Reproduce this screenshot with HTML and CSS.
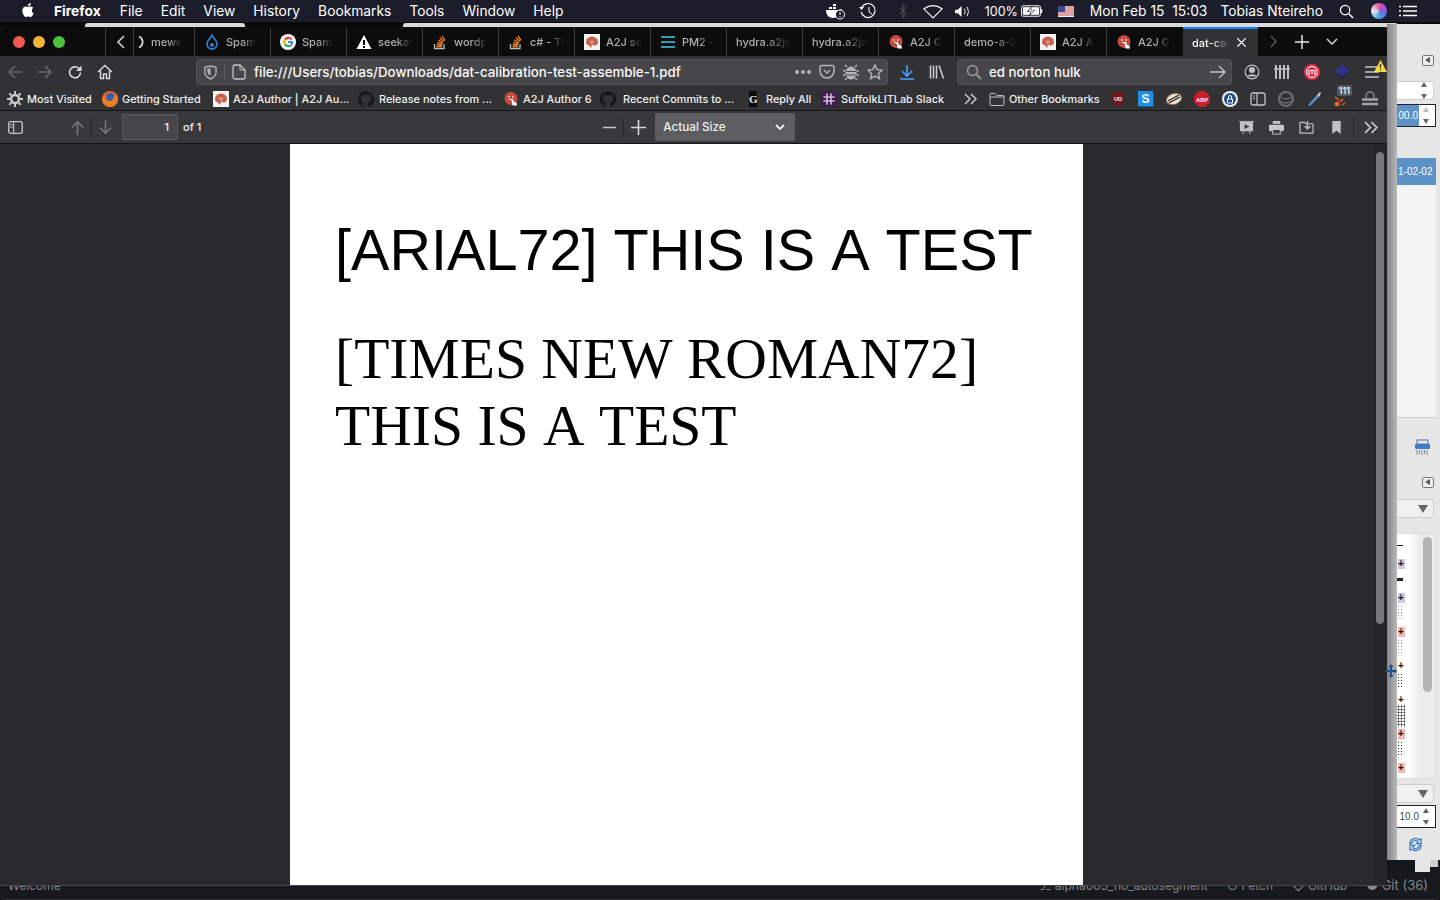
FILE: index.html
```html
<!DOCTYPE html>
<html lang="en">
<head>
    <meta charset="UTF-8">
    <title>dat-calibration-test-assemble-1.pdf</title>
    <link rel="stylesheet" href="styles.css">
</head>
<body>
<svg class="defs">
    <symbol id="brain" viewBox="0 0 16 16"><rect width="16" height="16" fill="#f4f4f4"/><path d="M2 8a6 5.600 0 0 1 12 0c0 2-1 3-2.500 3.600L8 11l-1 3-2-2.500C3 11 2 9.600 2 8z" fill="#c4634c"/><path d="M6 8q2-2 4 0M7 10q1-1 2 0" stroke="#f1c8b8" fill="none"/></symbol>
    <symbol id="a2j" viewBox="0 0 16 16"><circle cx="8" cy="7.500" r="6.500" fill="#c8493f"/><path d="M5 6h2M9 6h2M6 8.500h4" stroke="#fff" stroke-width="1"/><path d="M8.500 9l1 5.500h4.500l-.5-3-2.500-.5-.5-2z" fill="#fff"/></symbol>
    <symbol id="github" viewBox="0 0 24 24"><path fill="#17171a" d="M12 .297c-6.630 0-12 5.373-12 12 0 5.303 3.438 9.800 8.205 11.385.600.113.820-.258.820-.577 0-.285-.010-1.040-.015-2.040-3.338.724-4.042-1.610-4.042-1.610C4.422 18.070 3.633 17.700 3.633 17.700c-1.087-.744.084-.729.084-.729 1.205.084 1.838 1.236 1.838 1.236 1.070 1.835 2.809 1.305 3.495.998.108-.776.417-1.305.760-1.605-2.665-.300-5.466-1.332-5.466-5.930 0-1.310.465-2.380 1.235-3.220-.135-.303-.540-1.523.105-3.176 0 0 1.005-.322 3.300 1.230.960-.267 1.980-.399 3-.405 1.020.006 2.040.138 3 .405 2.280-1.552 3.285-1.230 3.285-1.230.645 1.653.240 2.873.120 3.176.765.840 1.230 1.910 1.230 3.220 0 4.610-2.805 5.625-5.475 5.920.420.360.810 1.096.810 2.220 0 1.606-.015 2.896-.015 3.286 0 .315.210.690.825.570C20.565 22.092 24 17.592 24 12.297c0-6.627-5.373-12-12-12"/></symbol>
    <symbol id="so" viewBox="0 0 16 16"><path d="M2.500 10v4.500h9.500V10" stroke="#bcbbbb" fill="none" stroke-width="1.300"/><path d="M4.500 12.500h5.500M4.700 10.500l5.400.6M5.200 8.300l5.300 1.500M6.200 6l4.800 2.600M7.800 3.800l4.200 3.500M10 1.800l3 4.500" stroke="#f48024" stroke-width="1.300" fill="none"/></symbol>
</svg>

<div class="desktop">
    <header class="menubar">
        <svg class="apple" viewBox="0 0 24 24"><path fill="#fff" d="M12.152 6.896c-.948 0-2.415-1.078-3.960-1.040-2.040.027-3.910 1.183-4.961 3.014-2.117 3.675-.546 9.103 1.519 12.090 1.013 1.454 2.208 3.090 3.792 3.039 1.520-.065 2.090-.987 3.935-.987 1.831 0 2.350.987 3.960.948 1.637-.026 2.676-1.480 3.676-2.948 1.156-1.688 1.636-3.325 1.662-3.415-.039-.013-3.182-1.221-3.220-4.857-.026-3.040 2.480-4.494 2.597-4.559-1.429-2.090-3.623-2.324-4.390-2.376-2-.156-3.675 1.090-4.610 1.090zM15.530 3.830c.843-1.012 1.400-2.427 1.245-3.830-1.207.052-2.662.805-3.532 1.818-.780.896-1.454 2.338-1.273 3.714 1.338.104 2.715-.688 3.559-1.701"/></svg>
        <nav class="menu-items">
            <b>Firefox</b><span>File</span><span>Edit</span><span>View</span><span>History</span><span>Bookmarks</span><span>Tools</span><span>Window</span><span>Help</span>
        </nav>
        <div class="status">
            <svg class="st st-docker" viewBox="0 0 20 18"><path d="M1 8h13c1 0 2-1 3-1-.5 4-4 9-9 9-4 0-7-3-7-8z" fill="#fff"/><path d="M4 5h3v2H4zM8 5h3v2H8zM8 2h3v2H8z" fill="#fff"/><circle cx="15" cy="12.500" r="4.500" fill="#1b1d2a" stroke="#fff"/><path d="M15 10v3M15 14v1" stroke="#fff"/></svg>
            <svg class="st st-time" viewBox="0 0 20 18"><path d="M4 5a7 7 0 1 1-.8 5" fill="none" stroke="#fff" stroke-width="1.200"/><path d="M1 5h5l-2.500 3z" fill="#fff"/><path d="M11 5v5l3 2" fill="none" stroke="#fff"/></svg>
            <svg class="st st-blue" viewBox="0 0 12 18"><path d="M2 5l8 8-4 4V1l4 4-8 8" fill="none" stroke="#55565f" stroke-width="1.200"/></svg>
            <svg class="st st-wifi" viewBox="0 0 22 16"><path d="M1 5q10-7 20 0L11 15z" fill="none" stroke="#fff" stroke-width="1.200"/></svg>
            <svg class="st st-vol" viewBox="0 0 18 14"><path d="M1 5h3l4-4v12l-4-4H1z" fill="#fff"/><path d="M11 4q2 3 0 6M14 2q3 5 0 10" fill="none" stroke="#fff"/></svg>
            <span class="st-pct">100%</span>
            <svg class="st st-batt" viewBox="0 0 23 12"><rect x=".5" y=".5" width="20" height="11" rx="2" fill="#1b1d2a" stroke="#fff"/><rect x="2" y="2" width="17" height="8" fill="#fff"/><path d="M21.500 4v4" stroke="#fff" stroke-width="1.500"/><path d="M12 0L6 7h4l-2 5 7-7h-4z" fill="#1b1d2a"/><path d="M11.500 1.500L7.500 6.500h3.500l-1.500 3.500 4.500-4.500h-3.500z" fill="#fff"/></svg>
            <svg class="st st-flag" viewBox="0 0 16 11"><rect width="16" height="11" fill="#eee"/><path d="M0 1h16M0 3h16M0 5h16M0 7h16M0 9h16" stroke="#c55" /><rect width="7" height="6" fill="#3a4a8c"/></svg>
            <span class="st-clock">Mon Feb 15&nbsp; 15:03</span>
            <span class="st-user">Tobias Nteireho</span>
            <svg class="st st-find" viewBox="0 0 16 16"><circle cx="6.500" cy="6.500" r="5" fill="none" stroke="#fff" stroke-width="1.300"/><path d="M10.500 10.500l4.500 4.500" stroke="#fff" stroke-width="1.500"/></svg>
            <span class="siri"></span>
            <svg class="st st-list" viewBox="0 0 18 12"><path d="M4 1.500h14M4 6h14M4 10.500h14" stroke="#fff" stroke-width="1.600"/><path d="M0 1.500h2M0 6h2M0 10.500h2" stroke="#fff" stroke-width="1.600"/></svg>
        </div>
    </header>

    <div class="back-strips">
        <i class="strip strip-a"></i>
        <i class="strip strip-b"></i>
    </div>

    <!-- ventana de atras, solo se ve el borde derecho -->
    <aside class="back-window">
        <div class="bw-shadow"></div>
        <div class="bw-body">
            <span class="bw-collapse bw-collapse-top"></span>
            <div class="bw-select bw-select-top"><span class="spin"></span></div>
            <div class="bw-input bw-input-top"><span class="bw-selected">00.0</span><span class="spin spin-dim"></span></div>
            <div class="bw-list"><div class="bw-row">1-02-02</div></div>
            <svg class="bw-shred" viewBox="0 0 17 17"><rect x="3" y="1" width="11" height="4" fill="#e8e8e8" stroke="#4a6f9e"/><rect x="1" y="5" width="15" height="5" rx="1" fill="#3d7dc4"/><path d="M3 11v5M5.500 11v4M8 11v5M10.500 11v4M13 11v5" stroke="#7d8a98"/></svg>
            <span class="bw-collapse bw-collapse-mid"></span>
            <div class="bw-select bw-select-mid"><i class="bw-drop"></i></div>
            <div class="bw-canvas">
                <div class="bw-dots">
                    <div class="dot-row dot-row-first"><i class="dash"></i><b class="plus plus-blue">+</b></div>
                    <div class="dot-row"><i class="wedge"></i><b class="plus plus-blue">+</b></div>
                    <div class="dot-row"><i class="noise"></i><b class="plus plus-red">+</b></div>
                    <div class="dot-row"><i class="noise"></i><b class="plus">+</b></div>
                    <div class="dot-row"><i class="noise noise-dark"></i><b class="plus">+</b></div>
                    <div class="dot-row"><i class="noise noise-big"></i><b class="plus plus-red">+</b></div>
                    <div class="dot-row"><i class="noise noise-dark"></i><b class="plus plus-red">+</b></div>
                </div>
                <div class="bw-scroll"><span></span></div>
            </div>
            <div class="bw-select bw-select-low"><i class="bw-drop"></i></div>
            <div class="bw-input bw-input-low"><span class="bw-value">10.0</span><span class="spin"></span></div>
            <svg class="bw-refresh" viewBox="0 0 16 18"><path d="M2 8a6 6 0 0 1 10-4l2-1v5H9l2-2a4 4 0 0 0-7 2zM14 10a6 6 0 0 1-10 4l-2 1v-5h5l-2 2a4 4 0 0 0 7-2z" fill="none" stroke="#3a7cc0" stroke-width="1.300"/></svg>
        </div>
        <div class="bw-feet"><i class="foot-a"></i><i class="foot-b"></i></div>
    </aside>

    <footer class="statusbar">
        <span class="sb-welcome">Welcome</span>
        <span class="sb-right">
            <span>&#9095; alpha005_no_autosegment</span>
            <span>&#8635; Fetch</span>
            <span>&#9671; GitHub</span>
            <span class="sb-git">&#9679; Git (36)</span>
        </span>
    </footer>

    <main class="firefox">
        <div class="tabbar">
            <div class="lights"><i class="red"></i><i class="yellow"></i><i class="green"></i></div>
            <div class="tab-scroll tab-scroll-left"><svg viewBox="0 0 10 14"><path d="M8 1L2 7l6 6" fill="none" stroke="#d4d4d6" stroke-width="1.500"/></svg></div>
            <div class="tab tab-first"><svg viewBox="0 0 16 16"><path d="M5 2.500a6 6 0 0 1 0 11" fill="none" stroke="#ddd" stroke-width="1.800"/></svg><span>mewe</span></div>
            <div class="tab"><svg viewBox="0 0 16 16"><path d="M8 1c1 3 5 5 5 9a5 5 0 0 1-10 0c0-4 4-6 5-9z" fill="none" stroke="#2a7fc4" stroke-width="1.800"/><circle cx="8" cy="11" r="2" fill="#2a7fc4"/></svg><span>Spam</span></div>
            <div class="tab"><svg viewBox="0 0 16 16"><circle cx="8" cy="8" r="8" fill="#fff"/><path d="M12.500 5A5.200 5.200 0 0 0 4 5l2 1.500a3 3 0 0 1 5-.5z" fill="#ea4335"/><path d="M4 5a5.200 5.200 0 0 0 0 6l2-1.500a3 3 0 0 1 0-3z" fill="#fbbc05"/><path d="M4 11a5.200 5.200 0 0 0 7.500 1L10 10.500a3 3 0 0 1-4-1z" fill="#34a853"/><path d="M8 7h5.200a5.200 5.200 0 0 1-1.700 5L10 10.500a2.500 2.500 0 0 0 1-1.500H8z" fill="#4285f4"/></svg><span>Spam</span></div>
            <div class="tab"><svg viewBox="0 0 16 16"><path d="M8 1l7.500 14H.5z" fill="#fff"/><path d="M7 6h2v5H7zM7 12h2v2H7z" fill="#0c0c0d"/></svg><span>seekal</span></div>
            <div class="tab"><svg viewBox="0 0 16 16"><use href="#so"/></svg><span>wordp</span></div>
            <div class="tab"><svg viewBox="0 0 16 16"><use href="#so"/></svg><span>c# - Ti</span></div>
            <div class="tab"><svg viewBox="0 0 16 16"><use href="#brain"/></svg><span>A2J se</span></div>
            <div class="tab"><svg viewBox="0 0 16 16"><path d="M1 3h14M1 8h14M1 13h14" stroke="#2f9fb4" stroke-width="2"/></svg><span>PM2 -</span></div>
            <div class="tab tab-plain"><span>hydra.a2ja</span></div>
            <div class="tab tab-plain"><span>hydra.a2ja</span></div>
            <div class="tab"><svg viewBox="0 0 16 16"><use href="#a2j"/></svg><span>A2J G</span></div>
            <div class="tab tab-plain"><span>demo-a-2</span></div>
            <div class="tab"><svg viewBox="0 0 16 16"><use href="#brain"/></svg><span>A2J A</span></div>
            <div class="tab"><svg viewBox="0 0 16 16"><use href="#a2j"/></svg><span>A2J G</span></div>
            <div class="tab tab-active"><span>dat-cal</span><svg class="tab-close" viewBox="0 0 12 12"><path d="M1.500 1.500l9 9M10.500 1.500l-9 9" stroke="#fff" stroke-width="1.500"/></svg></div>
            <div class="tab-tools">
                <svg class="tt-next" viewBox="0 0 10 14"><path d="M2 1l6 6-6 6" fill="none" stroke="#5b5b5f" stroke-width="1.500"/></svg>
                <svg class="tt-plus" viewBox="0 0 14 14"><path d="M7 0v14M0 7h14" stroke="#e4e4e6" stroke-width="1.500"/></svg>
                <svg class="tt-down" viewBox="0 0 12 8"><path d="M1 1l5 5 5-5" fill="none" stroke="#d4d4d6" stroke-width="1.500"/></svg>
            </div>
        </div>

        <div class="navbar">
            <div class="nav-btn"><svg viewBox="0 0 16 16"><path d="M15 8H2M8 2L2 8l6 6" fill="none" stroke="#69696d" stroke-width="1.500"/></svg></div>
            <div class="nav-btn"><svg viewBox="0 0 16 16"><path d="M1 8h13M8 2l6 6-6 6" fill="none" stroke="#69696d" stroke-width="1.500"/></svg></div>
            <div class="nav-btn"><svg viewBox="0 0 16 16"><path d="M13.500 8.500a5.500 5.500 0 1 1-1.700-4.200L14 6" fill="none" stroke="#d8d8da" stroke-width="1.600"/><path d="M14.500 1.500v5.500H9z" fill="#d8d8da"/></svg></div>
            <div class="nav-btn"><svg viewBox="0 0 16 16"><path d="M1 8l7-6.500L15 8M3.500 6.500V14.500h3V10h3v4.500h3V6.500" fill="none" stroke="#d8d8da" stroke-width="1.500"/></svg></div>
            <div class="urlbar">
                <svg class="url-shield" viewBox="0 0 14 16"><path d="M1 2.500q6-2.500 12 0v5q0 5-6 7.500-6-2.500-6-7.500z" fill="none" stroke="#b4b4b6" stroke-width="1.500"/><path d="M7 3.500v8q-3.500-2-3.500-5v-2.500z" fill="#b4b4b6"/></svg>
                <i class="url-sep"></i>
                <svg class="url-page" viewBox="0 0 14 16"><path d="M1 3a2 2 0 0 1 2-2h5l5 5v7a2 2 0 0 1-2 2H3a2 2 0 0 1-2-2z" fill="none" stroke="#c4c4c6" stroke-width="1.300"/><path d="M8 1v5h5" fill="none" stroke="#c4c4c6"/></svg>
                <span class="url-text">file:///Users/tobias/Downloads/dat-calibration-test-assemble-1.pdf</span>
                <div class="url-actions">
                    <span class="dots"><i></i><i></i><i></i></span>
                    <svg viewBox="0 0 16 16"><path d="M1 3a1.500 1.500 0 0 1 1.500-1.500h11A1.500 1.500 0 0 1 15 3v4a7 7 0 0 1-14 0z" fill="none" stroke="#b4b4b6" stroke-width="1.500"/><path d="M5 6l3 3 3-3" fill="none" stroke="#b4b4b6" stroke-width="1.500"/></svg>
                    <svg viewBox="0 0 16 16"><ellipse cx="8" cy="9" rx="5.500" ry="6.500" fill="#b4b4b6"/><path d="M4 3L2 1M12 3l2-2M3 7H0M13 7h3M3 11H0M13 11h3M4 14l-2 2M12 14l2 2" stroke="#b4b4b6" stroke-width="1.300"/><path d="M2.500 7.500h11M2.500 11h11" stroke="#47474a"/></svg>
                    <svg viewBox="0 0 16 16"><path d="M8 1l2.100 4.600 5 .6-3.700 3.400 1 5L8 12.100 3.600 14.600l1-5L.9 6.200l5-.6z" fill="none" stroke="#b4b4b6" stroke-width="1.400"/></svg>
                </div>
            </div>
            <div class="nav-btn nav-download"><svg viewBox="0 0 16 16"><path d="M8 1v10M3 7l5 5 5-5M1 15h14" fill="none" stroke="#45a1ff" stroke-width="1.600"/></svg></div>
            <div class="nav-btn"><svg viewBox="0 0 16 16"><path d="M1.500 1.500v13M4.500 1.500v13M7.500 1.500v13M10 1.500l4.500 13" fill="none" stroke="#d0d0d2" stroke-width="1.500"/></svg></div>
            <div class="searchbar">
                <svg viewBox="0 0 16 16"><circle cx="6.500" cy="6.500" r="5" fill="none" stroke="#9a9a9c" stroke-width="1.500"/><path d="M10.500 10.500l4.500 4.500" stroke="#9a9a9c" stroke-width="1.800"/></svg>
                <span class="search-text">ed norton hulk</span>
                <svg class="search-go" viewBox="0 0 16 16"><path d="M0 8h15M9 2l6 6-6 6" fill="none" stroke="#c4c4c6" stroke-width="1.300"/></svg>
            </div>
            <div class="nav-addons">
                <div class="nav-btn"><svg viewBox="0 0 16 16"><circle cx="8" cy="8" r="6.800" fill="none" stroke="#c0c0c2" stroke-width="1.200"/><circle cx="8" cy="6" r="3" fill="#c0c0c2"/><path d="M3 12.500a5.500 4 0 0 1 10 0z" fill="#c0c0c2"/></svg></div>
                <div class="nav-btn"><svg viewBox="0 0 16 16"><path d="M2 1v14M6 1v14M10 1v14M14 1v14" stroke="#c0c0c2" stroke-width="2"/><path d="M0 5h16" stroke="#c0c0c2" stroke-width="1.500"/></svg></div>
                <div class="nav-btn"><svg viewBox="0 0 16 16"><circle cx="8" cy="8" r="8" fill="#e8314f"/><circle cx="8" cy="8" r="5.500" fill="none" stroke="#fff"/><path d="M5 11V6.500h6V11M8 6.500V10" fill="none" stroke="#fff" stroke-width="1.200"/></svg></div>
                <div class="nav-btn"><svg viewBox="0 0 16 16"><path d="M8 1l8 6-8 5-8-5z" fill="#31318f"/><path d="M0 9l8 6 8-6-8 4.500z" fill="#1b1b5e"/></svg></div>
                <div class="nav-btn"><svg class="burger" viewBox="0 0 16 16"><path d="M1 3h14M1 8h14M1 13h14" stroke="#c4c4c6" stroke-width="1.600"/></svg><svg class="warn" viewBox="0 0 14 13"><path d="M7 0l7 13H0z" fill="#ffd93b"/><path d="M6.300 4h1.400v5H6.300zM6.300 10h1.400v1.500H6.300z" fill="#333"/></svg></div>
            </div>
        </div>

        <div class="bookmarks">
            <div class="bm bm-visited"><svg viewBox="0 0 16 16"><circle cx="8" cy="8" r="4" fill="none" stroke="#c8c8ca" stroke-width="2.500"/><path d="M8 0v3M8 13v3M0 8h3M13 8h3M2.300 2.300l2 2M11.700 11.700l2 2M2.300 13.700l2-2M11.700 4.300l2-2" stroke="#c8c8ca" stroke-width="2"/></svg><span>Most Visited</span></div>
            <div class="bm bm-started"><svg viewBox="0 0 16 16"><circle cx="8" cy="8" r="8" fill="#e8662a"/><circle cx="8.500" cy="6.500" r="4.500" fill="#3a5fa8"/><path d="M0 8c0 5 4 8 8 8 5 0 8-4 8-8 0-2-1-4-2-5 0 2-1 3-3 3 1 2-1 4-3 4S3 8 4 5C2 5 0 6 0 8z" fill="#ec7d22"/></svg><span>Getting Started</span></div>
            <div class="bm bm-author"><svg viewBox="0 0 16 16"><use href="#brain"/></svg><span>A2J Author | A2J Au...</span></div>
            <div class="bm bm-release"><svg viewBox="0 0 24 24"><use href="#github"/></svg><span>Release notes from ...</span></div>
            <div class="bm bm-six"><svg viewBox="0 0 16 16"><use href="#a2j"/></svg><span>A2J Author 6</span></div>
            <div class="bm bm-commits"><svg viewBox="0 0 24 24"><use href="#github"/></svg><span>Recent Commits to ...</span></div>
            <div class="bm bm-reply"><span class="g-icon">G</span><span>Reply All</span></div>
            <div class="bm bm-slack"><svg viewBox="0 0 16 16"><rect width="16" height="16" fill="#3f1d4f"/><path d="M6 3v10M10 3v10M3 6h10M3 10h10" stroke="#cdb8d2" stroke-width="1.700" stroke-linecap="round"/></svg><span>SuffolkLITLab Slack</span></div>
            <svg class="bm-more" viewBox="0 0 14 12"><path d="M1 1l5 5-5 5M7 1l5 5-5 5" fill="none" stroke="#c8c8ca" stroke-width="1.500"/></svg>
            <div class="bm bm-other"><svg viewBox="0 0 16 16"><path d="M1 3.500a1 1 0 0 1 1-1h4l2 2h6a1 1 0 0 1 1 1v8a1 1 0 0 1-1 1H2a1 1 0 0 1-1-1zM1 6h14" fill="none" stroke="#bdbdbf"/></svg><span>Other Bookmarks</span></div>
            <div class="bm-addons">
                <svg viewBox="0 0 16 16"><path d="M8 1l6 2v6q0 4-6 6-6-2-6-6V3z" fill="#7a1414"/><text x="8" y="10" class="addon-label">UO</text></svg>
                <svg viewBox="0 0 16 16"><rect width="15" height="15" fill="#1e90e6"/><path d="M15 1l1 2v13H3l-2-1h14z" fill="#135c94"/><text x="7.500" y="12" class="addon-s">S</text></svg>
                <svg viewBox="0 0 16 16"><ellipse cx="8" cy="8" rx="8" ry="5.500" transform="rotate(-20 8 8)" fill="#e6e0d6" stroke="#7b5a3a"/><path d="M2 10l11-6M3 12l11-6" stroke="#2a1f14" stroke-width="1.300"/></svg>
                <svg viewBox="0 0 16 16"><path d="M5 0h6l5 5v6l-5 5H5l-5-5V5z" fill="#c8202a"/><text x="8" y="10.500" class="addon-abp">ABP</text></svg>
                <svg viewBox="0 0 16 16"><circle cx="8" cy="8" r="8" fill="#f0f0f2"/><circle cx="8" cy="8" r="6" fill="#1d4f8c"/><path d="M5.500 8h5v4h-5zM6.500 8V6a1.500 1.500 0 0 1 3 0v2" fill="none" stroke="#fff"/></svg>
                <svg viewBox="0 0 16 16"><rect x="1" y="2" width="14" height="12" rx="2" fill="none" stroke="#c4c4c6" stroke-width="1.300"/><path d="M7 2v12M3 5h2M3 7.500h2" stroke="#c4c4c6" stroke-width="1.200"/></svg>
                <svg viewBox="0 0 16 16"><circle cx="8" cy="8" r="7" fill="none" stroke="#6e6e70" stroke-width="2"/><path d="M2 6q6 4 12 0M2 10q6 4 12 0" stroke="#6e6e70" stroke-width="1.500" fill="none"/></svg>
                <svg viewBox="0 0 16 16"><path d="M2 14l9-10 2 2-9 9z" fill="#5b8fc9"/><path d="M11 4l3-3 1 1-2 4z" fill="#d0d0d2"/></svg>
                <span class="badge-addon"><svg viewBox="0 0 16 16"><circle cx="3" cy="13" r="2.500" fill="#e8622a"/><path d="M6 11l3-3M1 6l4 3M8 14l3-2" stroke="#e8622a" stroke-width="1.500"/></svg><span class="badge">111</span></span>
                <svg viewBox="0 0 16 16"><path d="M4 7V5a4 4 0 0 1 8 0v2" fill="none" stroke="#8c8c8e" stroke-width="1.500"/><path d="M0 8.500h16M0 13h16" stroke="#a4a4a6" stroke-width="2.500"/></svg>
            </div>
        </div>

        <div class="pdf-toolbar">
            <div class="pdf-btn"><svg viewBox="0 0 16 14"><rect x=".8" y=".8" width="14.400" height="12.400" rx="2" fill="none" stroke="#c8c8ca" stroke-width="1.400"/><path d="M6 1v12" stroke="#c8c8ca" stroke-width="1.200"/><path d="M2 4h3M2 6.500h3" stroke="#c8c8ca"/></svg></div>
            <div class="pdf-pager">
                <div class="pdf-btn"><svg viewBox="0 0 16 16"><path d="M8 16V2M2 8l6-6 6 6" fill="none" stroke="#79797c" stroke-width="1.600"/></svg></div>
                <i class="tb-sep"></i>
                <div class="pdf-btn"><svg viewBox="0 0 16 16"><path d="M8 0v14M2 8l6 6 6-6" fill="none" stroke="#79797c" stroke-width="1.600"/></svg></div>
                <span class="page-input">1</span>
                <span class="page-of">of 1</span>
            </div>
            <div class="pdf-zoom">
                <div class="pdf-btn"><svg viewBox="0 0 14 14"><path d="M1 7h12" stroke="#c8c8ca" stroke-width="1.500"/></svg></div>
                <i class="tb-sep"></i>
                <div class="pdf-btn"><svg viewBox="0 0 14 14"><path d="M7 0v14M0 7h14" stroke="#d8d8da" stroke-width="1.500"/></svg></div>
                <div class="zoom-select"><span>Actual Size</span><svg viewBox="0 0 10 7"><path d="M1 1l4 4 4-4" fill="none" stroke="#f0f0f2" stroke-width="1.800"/></svg></div>
            </div>
            <div class="pdf-right">
                <div class="pdf-btn"><svg viewBox="0 0 16 16"><path d="M0 1.500h16M4 15l1-3M12 15l-1-3" stroke="#c0c0c2"/><rect x="1" y="2" width="14" height="10" fill="#c0c0c2"/><path d="M6 4.500l5 2.500-5 2.500z" fill="#38383d"/></svg></div>
                <div class="pdf-btn"><svg viewBox="0 0 16 16"><path d="M4 1h8v3H4z" fill="#c8c8ca"/><rect y="5" width="16" height="7" rx="1.500" fill="#c8c8ca"/><rect x="4" y="10" width="8" height="5" fill="#38383d" stroke="#c8c8ca"/></svg></div>
                <div class="pdf-btn"><svg viewBox="0 0 16 16"><path d="M1 3.500a1 1 0 0 1 1-1h4l1.500 1.500H14a1 1 0 0 1 1 1v9H1z" fill="none" stroke="#c0c0c2" stroke-width="1.300"/><path d="M9 1v8M6 6.500L9 9.500l3-3" fill="none" stroke="#c0c0c2" stroke-width="1.500"/></svg></div>
                <div class="pdf-btn"><svg viewBox="0 0 16 16"><path d="M3.500 1h9v14L8 11.500 3.500 15z" fill="#c0c0c2"/></svg></div>
                <i class="tb-sep"></i>
                <div class="pdf-btn"><svg viewBox="0 0 14 12"><path d="M1 1l5 5-5 5M7 1l5 5-5 5" fill="none" stroke="#c8c8ca" stroke-width="1.600"/></svg></div>
            </div>
        </div>

        <div class="viewer">
            <article class="pdf-page">
                <p class="line-arial">[ARIAL72] THIS IS A TEST</p>
                <p class="line-times">[TIMES NEW ROMAN72] THIS IS A TEST</p>
            </article>
            <div class="viewer-scroll"><span></span></div>
        </div>
    </main>

    <svg class="move-cursor" viewBox="0 0 12 14"><path d="M6 0l2.500 3H7v3h2.500V4.500L12 7 9.500 9.500V8H7v3h1.500L6 14l-2.500-3H5V8H2.500v1.500L0 7l2.500-2.500V6H5V3H3.500z" fill="#1f4f8f"/></svg>
</div>
</body>
</html>
```

FILE: styles.css
```css
* {
    box-sizing: border-box;
}
html, body {
    margin: 0;
    height: 100%;
    overflow: hidden;
}
body {
    font-family: Inter, "Noto Sans", sans-serif;
    background: #14171b;
}
p {
    margin: 0;
}
svg {
    display: block;
    flex: none;
}
.defs {
    position: absolute;
    width: 0;
    height: 0;
}
.desktop {
    position: relative;
    width: 1440px;
    height: 900px;
    overflow: hidden;
    background: #14171b;
}

/* barra de menu */
.menubar {
    display: flex;
    align-items: center;
    height: 22px;
    padding-left: 21px;
    background: #1b1d2a;
    color: #fff;
    font-size: 13.800px;
}
.apple {
    width: 14px;
    height: 16px;
    margin-bottom: 2px;
}
.menu-items {
    display: flex;
    gap: 18.050px;
    margin-left: 19px;
}
.menu-items b {
    font-weight: 700;
    margin-right: 1px;
}
.status {
    display: flex;
    align-items: center;
    margin-left: auto;
    height: 22px;
}
.st-docker { width: 20px; height: 18px; margin-right: 13px; }
.st-time { width: 20px; height: 18px; margin-right: 20px; }
.st-blue { width: 10px; height: 16px; margin-right: 15px; }
.st-wifi { width: 20px; height: 15px; margin-right: 11px; }
.st-vol { width: 17px; height: 13px; margin-right: 14px; }
.st-pct { width: 31px; font-size: 12.500px; margin-right: 5px; }
.st-batt { width: 22px; height: 12px; margin-right: 15px; }
.st-flag { width: 16px; height: 11px; margin-right: 16px; }
.st-clock { margin-right: 13px; }
.st-user { margin-right: 16px; }
.st-find { width: 15px; height: 15px; margin-right: 17px; }
.siri {
    width: 16px;
    height: 16px;
    margin-right: 11px;
    border-radius: 50%;
    background: conic-gradient(#e2559c, #7b5ce0, #3fa9e8, #e8e8f0, #e2559c);
}
.st-list { width: 20px; height: 12px; margin-right: 22px; }

/* bordes de ventanas detras */
.back-strips {
    display: flex;
    height: 5px;
    background: #08090b;
}
.strip {
    display: block;
    height: 4px;
    margin-top: 1px;
    background: #d9d9d9;
    border-radius: 3px 3px 0 0;
}
.strip-a {
    width: 160px;
    margin-left: 85px;
}
.strip-b {
    width: 995px;
    margin-left: 158px;
}

.back-window {
    position: absolute;
    left: 1387px;
    top: 24px;
    width: 53px;
    height: 857px;
    display: flex;
}
.bw-shadow {
    width: 10px;
    height: 836px;
    background: linear-gradient(90deg, #858585, #b8b8b8);
}
.bw-body {
    flex: 1;
    height: 836px;
    display: flex;
    flex-direction: column;
    background: #e6e6e6;
    font-family: "Liberation Sans", sans-serif;
}
.bw-collapse {
    display: block;
    position: relative;
    width: 12px;
    height: 11px;
    margin-left: 25px;
    border: 1px solid #777;
    border-radius: 2px;
    background: #eee;
}
.bw-collapse::after {
    content: "";
    position: absolute;
    left: 2px;
    top: 1px;
    border: 3.500px solid transparent;
    border-right: 5px solid #555;
    border-left: 0;
}
.bw-collapse-top { margin-top: 31px; }
.bw-collapse-mid { margin-top: 21px; }
.bw-select {
    display: flex;
    align-items: center;
    justify-content: flex-end;
    width: 37px;
    height: 19px;
    padding-right: 5px;
    background: #fff;
    border: 1px solid #ccc;
    border-left: 0;
    border-radius: 0 4px 4px 0;
}
.bw-select-top { margin-top: 15px; }
.bw-select-mid { margin-top: 11px; background: #f0f0f0; }
.bw-select-low { margin-top: 5px; background: #f0f0f0; }
.bw-input {
    display: flex;
    align-items: center;
    justify-content: space-between;
    width: 39px;
    height: 23px;
    padding-right: 5px;
    border: 1px solid #222;
    border-left: 0;
    background: #fff;
    font-size: 10px;
}
.bw-input-top { margin-top: 4px; }
.bw-input-low { margin-top: 2px; justify-content: flex-end; gap: 4px; }
.bw-selected {
    width: 22px;
    height: 21px;
    line-height: 21px;
    text-align: right;
    padding-right: 1px;
    background: #5b92c8;
    color: #fff;
}
.bw-value {
    color: #444;
}
.spin {
    display: block;
    width: 7px;
    height: 13px;
    position: relative;
}
.spin::before, .spin::after {
    content: "";
    position: absolute;
    left: 0;
    border: 3.500px solid transparent;
}
.spin::before {
    top: -2px;
    border-bottom: 5px solid #666;
    border-top: 0;
}
.spin::after {
    bottom: -2px;
    border-top: 5px solid #666;
    border-bottom: 0;
}
.spin-dim::before {
    border-bottom-color: #bbb;
}
.bw-list {
    width: 39px;
    height: 260px;
    margin-top: 31px;
    background: #f4f4f4;
    border-bottom: 1px solid #ccc;
}
.bw-row {
    height: 27px;
    line-height: 27px;
    background: #5b92c8;
    color: #fff;
    font-size: 10px;
    padding-left: 1px;
}
.bw-shred {
    width: 17px;
    height: 17px;
    margin: 21px 0 0 17px;
}
.bw-drop {
    display: block;
    border: 5px solid transparent;
    border-top: 8px solid #666;
    border-bottom: 0;
}
.bw-canvas {
    display: flex;
    width: 39px;
    height: 246px;
    margin-top: 15px;
    background: #fff;
    border: 1px solid #ddd;
    border-left: 0;
}
.bw-dots {
    width: 23px;
    height: 100%;
    background: linear-gradient(90deg, #fff 50%, #ececec);
    overflow: hidden;
}
.dot-row {
    height: 34px;
    display: flex;
    flex-direction: column;
    justify-content: flex-end;
    align-items: flex-start;
}
.dot-row-first {
    height: 35px;
}
.plus {
    display: block;
    width: 7px;
    height: 10px;
    margin-left: 1px;
    font: 700 10px/10px "Liberation Sans", sans-serif;
    color: #111;
}
.plus-blue { background: #c3c9ee; }
.plus-red { background: #f1b8b8; }
.dash {
    display: block;
    width: 6px;
    height: 1px;
    background: #222;
    margin-bottom: 13px;
}
.wedge {
    display: block;
    width: 6px;
    height: 3px;
    margin-bottom: 12px;
    background: #222;
}
.noise {
    display: block;
    width: 6px;
    height: 16px;
    margin-bottom: 6px;
    background: radial-gradient(#999 0.500px, transparent 1px) 0 0 / 3px 3px;
}
.noise-dark {
    background-image: radial-gradient(#333 0.700px, transparent 1px);
}
.noise-big {
    width: 8px;
    height: 26px;
    margin-bottom: 2px;
    background-image: radial-gradient(#333 0.800px, transparent 1.200px);
    background-size: 3px 3px;
}
.bw-scroll {
    flex: 1;
    background: #ececec;
    padding: 3px 3px;
}
.bw-scroll span {
    display: block;
    height: 155px;
    border-radius: 5px;
    background: #b4b4b4;
}
.bw-refresh {
    width: 15px;
    height: 17px;
    margin: 8px 0 0 11px;
}
.bw-feet {
    position: absolute;
    left: 28px;
    top: 836px;
    display: flex;
}
.foot-a {
    display: block;
    width: 15px;
    height: 21px;
    background: #e6e6e6;
}
.foot-b {
    display: block;
    width: 8px;
    height: 7px;
    background: #cfcfcf;
}
.move-cursor {
    position: absolute;
    left: 1385px;
    top: 664px;
    width: 12px;
    height: 14px;
}

.statusbar {
    position: absolute;
    left: 0;
    right: 0;
    bottom: 0;
    height: 28px;
    display: flex;
    align-items: flex-end;
    justify-content: space-between;
    padding: 0 12px 6px 8px;
    background: #16191d;
    border-bottom: 1px solid #2c2f33;
    border-radius: 0 0 6px 6px;
    color: #85878b;
    font-size: 12px;
}
.sb-right {
    display: flex;
    align-items: flex-end;
    gap: 19px;
}
.sb-git {
    font-size: 13px;
}

/* ventana de firefox */
.firefox {
    position: absolute;
    left: 0;
    top: 27px;
    width: 1387px;
    height: 859px;
    display: flex;
    flex-direction: column;
    border-radius: 6px 6px 0 0;
    overflow: hidden;
    background: #2a2a2e;
    border-bottom: 1px solid #46464b;
}
.tabbar {
    display: flex;
    align-items: stretch;
    height: 29px;
    background: #0c0c0d;
    color: #b1b1b3;
    font-size: 11px;
    font-weight: 500;
    flex: none;
}
.lights {
    display: flex;
    align-items: center;
    gap: 8px;
    width: 105px;
    padding-left: 13px;
}
.lights i {
    width: 12px;
    height: 12px;
    border-radius: 50%;
}
.red { background: #ee5a52; }
.yellow { background: #f4b53a; }
.green { background: #4dc040; }
.tab-scroll {
    display: flex;
    align-items: center;
    width: 28px;
    padding-left: 10px;
    border-left: 1px solid #3a3a3d;
}
.tab-scroll svg {
    width: 10px;
    height: 14px;
}
.tab {
    display: flex;
    align-items: center;
    gap: 6px;
    width: 76px;
    padding: 0 10px 0 9px;
    border-left: 1px solid #3a3a3d;
    white-space: nowrap;
}
.tab svg {
    width: 16px;
    height: 16px;
}
.tab span {
    -webkit-mask-image: linear-gradient(90deg, #000 55%, transparent 100%);
    mask-image: linear-gradient(90deg, #000 55%, transparent 100%);
}
.tab-first {
    width: 61px;
    padding-left: 0;
    gap: 1px;
}
.tab-active {
    width: 75px;
    margin-left: 1px;
    padding: 0 11px 0 9px;
    justify-content: space-between;
    gap: 0;
    background: #323234;
    border-top: 2px solid #0a84ff;
    border-left: 0;
    color: #f9f9fa;
}
.tab-active .tab-close {
    width: 11px;
    height: 11px;
}
.tab-tools {
    display: flex;
    align-items: center;
}
.tt-next { width: 9px; height: 13px; margin-left: 11px; }
.tt-plus { width: 14px; height: 14px; margin-left: 17px; }
.tt-down { width: 12px; height: 8px; margin-left: 17px; }

.navbar {
    display: flex;
    align-items: center;
    height: 32px;
    flex: none;
    background: #323234;
}
.nav-btn {
    position: relative;
    width: 30px;
    height: 26px;
    display: flex;
    align-items: center;
    justify-content: center;
}
.nav-btn svg {
    width: 16px;
    height: 16px;
}
.nav-btn .warn {
    position: absolute;
    top: 1px;
    left: 17px;
    width: 13px;
    height: 12px;
}
.urlbar, .searchbar {
    display: flex;
    align-items: center;
    height: 26px;
    background: #47474a;
    border: 1px solid #525255;
    border-radius: 4px;
    color: #f9f9fa;
    font-size: 13.300px;
    font-weight: 500;
}
.urlbar {
    width: 692px;
    margin-left: 76px;
    padding-left: 7px;
}
.url-shield {
    width: 13px;
    height: 15px;
}
.url-sep {
    width: 1px;
    height: 16px;
    margin: 0 7px 0 7px;
    background: #5f5f62;
}
.url-page {
    width: 14px;
    height: 16px;
    margin-right: 8px;
}
.url-actions {
    display: flex;
    align-items: center;
    gap: 8px;
    margin-left: auto;
    padding-right: 4px;
}
.url-actions svg {
    width: 16px;
    height: 16px;
}
.dots {
    display: flex;
    gap: 2px;
}
.dots i {
    width: 4px;
    height: 4px;
    border-radius: 50%;
    background: #b4b4b6;
}
.nav-download {
    margin-left: 4px;
}
.searchbar {
    width: 275px;
    margin-left: 5px;
    padding: 0 5px 0 8px;
}
.searchbar svg {
    width: 16px;
    height: 16px;
}
.search-text {
    margin-left: 7px;
}
.searchbar .search-go {
    margin-left: auto;
}
.nav-addons {
    display: flex;
    margin-left: 5px;
}

.bookmarks {
    display: flex;
    align-items: center;
    height: 23px;
    padding: 0 0 1px 7px;
    flex: none;
    background: #323234;
    border-bottom: 1px solid #151516;
    color: #f0f0f1;
    font-size: 10.900px;
    font-weight: 500;
    white-space: nowrap;
}
.bm {
    display: flex;
    align-items: center;
    gap: 4px;
}
.bm svg {
    width: 16px;
    height: 16px;
}
.bm-visited { width: 95px; }
.bm-started { width: 111px; }
.bm-author { width: 145px; gap: 4px; }
.bm-release { width: 145px; gap: 5px; }
.bm-six { width: 97px; gap: 4px; }
.bm-commits { width: 145px; gap: 7px; }
.bm-reply { width: 76px; gap: 9px; }
.bm-slack { width: 143px; gap: 4px; }
.g-icon {
    width: 8px;
    height: 16px;
    margin-left: 4px;
    overflow: hidden;
    text-align: center;
    background: #0c0c0d;
    color: #e8e8e8;
    font: 700 11px/16px "Liberation Serif", serif;
}
.bm-more {
    width: 14px;
    height: 12px;
    margin-right: 11px;
}
.bm-other {
    gap: 4px;
}
.bm-addons {
    display: flex;
    align-items: center;
    gap: 12px;
    margin-left: 10px;
}
.bm-addons > svg {
    width: 16px;
    height: 16px;
}
.addon-label, .addon-abp {
    fill: #fff;
    font: 700 5.500px "Liberation Sans", sans-serif;
    text-anchor: middle;
}
.addon-s {
    fill: #fff;
    font: 700 12px "Liberation Sans", sans-serif;
    text-anchor: middle;
}
.badge-addon {
    position: relative;
    display: block;
    width: 16px;
    height: 16px;
}
.badge-addon svg {
    width: 16px;
    height: 16px;
}
.badge {
    position: absolute;
    left: 3px;
    top: -6px;
    padding: 0 2px;
    background: #5a5a5d;
    border-radius: 2px;
    color: #fff;
    font-size: 9px;
    line-height: 11px;
}

.pdf-toolbar {
    display: flex;
    align-items: center;
    height: 33px;
    flex: none;
    background: #38383d;
    border-bottom: 1px solid #151516;
    color: #f0f0f1;
    font-size: 11px;
    font-weight: 500;
}
.pdf-btn {
    width: 30px;
    height: 26px;
    display: flex;
    align-items: center;
    justify-content: center;
}
.pdf-btn svg {
    width: 15px;
    height: 15px;
}
.tb-sep {
    display: block;
    width: 1px;
    height: 20px;
    background: #2a2a2e;
}
.pdf-pager {
    display: flex;
    align-items: center;
    margin-left: 32px;
}
.pdf-pager .tb-sep {
    margin: 0 -2px 0 -1px;
}
.page-input {
    width: 56px;
    height: 26px;
    margin-left: 2px;
    padding-right: 8px;
    line-height: 25px;
    text-align: right;
    border: 1px solid #59595c;
    border-radius: 2px;
    background: #47474a;
}
.page-of {
    margin-left: 5px;
}
.pdf-zoom {
    display: flex;
    align-items: center;
    margin-left: 393px;
}
.pdf-zoom .tb-sep {
    margin: 0 -1px;
}
.zoom-select {
    display: flex;
    align-items: center;
    justify-content: space-between;
    width: 140px;
    height: 28px;
    margin-left: 2px;
    padding: 0 10px 0 8px;
    background: #5d5d60;
    border-radius: 2px;
    font-size: 11.700px;
}
.zoom-select svg {
    width: 10px;
    height: 7px;
}
.pdf-right {
    display: flex;
    align-items: center;
    margin-left: auto;
    padding-right: 1px;
}
.pdf-right .tb-sep {
    margin: 0 2px;
}

.viewer {
    flex: 1;
    min-height: 0;
    display: flex;
    background: #2a2a2e;
    position: relative;
}
.pdf-page {
    width: 793px;
    margin-left: 290px;
    padding: 71px 45px 0;
    background: #fff;
    color: #000;
    font-size: 57.600px;
    font-kerning: none;
}
.line-arial {
    font-family: "Liberation Sans", Arial, sans-serif;
    line-height: 70px;
    white-space: nowrap;
}
.line-times {
    margin-top: 40px;
    font-family: "Liberation Serif", "Times New Roman", serif;
    line-height: 67px;
}
.viewer-scroll {
    margin-left: auto;
    width: 14px;
    padding: 8px 3px 0;
    background: #262629;
}
.viewer-scroll span {
    display: block;
    width: 8px;
    height: 472px;
    border-radius: 4px;
    background: #77777a;
}
```
